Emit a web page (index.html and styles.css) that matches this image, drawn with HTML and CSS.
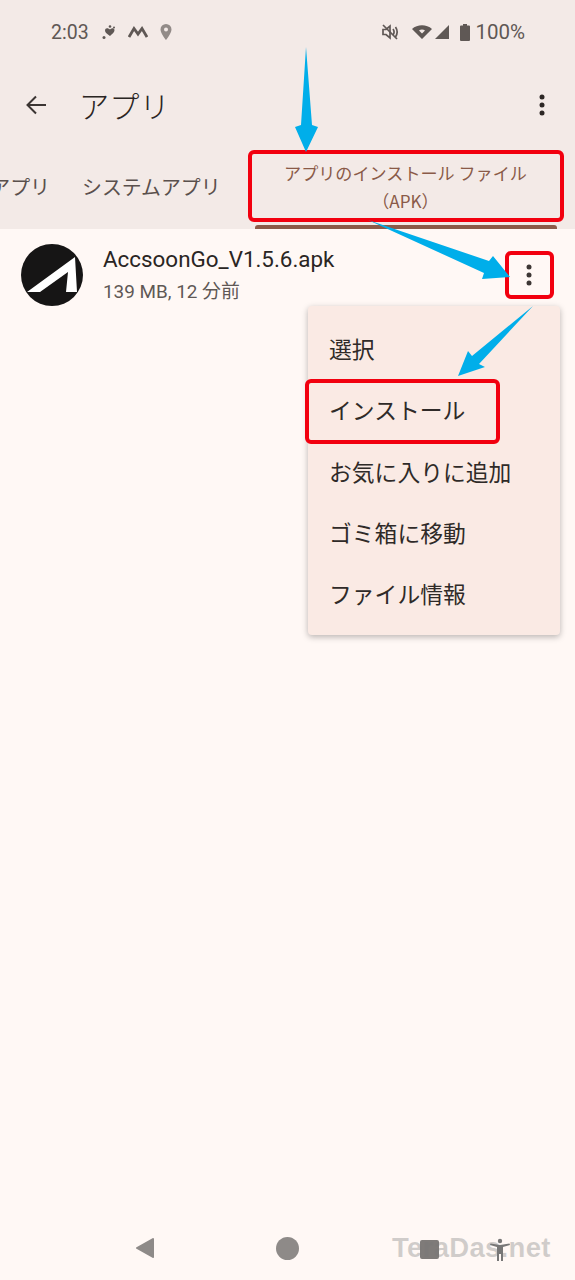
FILE: index.html
```
<!DOCTYPE html>
<html lang="ja">
<head>
<meta charset="utf-8">
<title>アプリ</title>
<link rel="stylesheet" href="styles.css">
</head>
<body>
<div class="screen">
  <header class="top">
    <div class="status">
      <div class="status-left">
        <span class="time">2:03</span>
        <svg class="ic" width="16" height="16" viewBox="0 0 16 16"><path d="M8 14c-3-2-5-3.500-5-5.500C3 7 4 6.200 5 6.200c1.200 0 2.300.6 3 1.300.7-.7 1.600-1.300 2.800-1.300 1 0 1.700.8 1.700 2 0 2-2.500 3.800-4.500 5.800z" transform="translate(1 -2)" fill="#5f5855"/><circle cx="9" cy="2.500" r="1.300" fill="#5f5855"/><circle cx="3" cy="13.500" r="1.500" fill="#5f5855"/><circle cx="13" cy="3.500" r="1" fill="#5f5855"/></svg>
        <svg class="ic" width="20" height="14" viewBox="0 0 20 14"><path d="M1 12 6 3.500 10 9l4-5.500L19 12" fill="none" stroke="#5f5855" stroke-width="2.800"/></svg>
        <svg class="ic" width="14" height="18" viewBox="0 0 14 18"><path fill-rule="evenodd" d="M7 1a5.500 5.500 0 0 0-5.500 5.500C1.500 10.500 7 17 7 17s5.500-6.500 5.500-10.500A5.500 5.500 0 0 0 7 1zm0 3.500a2 2 0 1 1 0 4 2 2 0 0 1 0-4z" fill="#928b88"/></svg>
      </div>
      <div class="status-right">
        <svg class="ic mute" width="18" height="18" viewBox="0 0 18 18"><path d="M2 6.500h3L9 3v12l-4-3.500H2z" fill="none" stroke="#5f5855" stroke-width="1.700"/><path d="M12 6c1.300 1.800 1.300 4.200 0 6M14.500 4c2 3 2 7 0 10M2 2l14 14" fill="none" stroke="#5f5855" stroke-width="1.700"/></svg>
        <svg class="ic wifi" width="22" height="16" viewBox="0 0 22 16"><path fill-rule="evenodd" d="M11 15 1 5c5.500-5 14.500-5 20 0zm0-5.500 3-3c-1.800-1.200-4.200-1.200-6 0z" fill="#5f5855"/></svg>
        <svg class="ic signal" width="16" height="16" viewBox="0 0 16 16"><path d="M15 1v14H1z" fill="#5f5855"/></svg>
        <svg class="ic battery" width="10" height="17" viewBox="0 0 10 17"><path d="M3 0h4v1.500h2a1 1 0 0 1 1 1V16a1 1 0 0 1-1 1H1a1 1 0 0 1-1-1V2.500a1 1 0 0 1 1-1h2z" fill="#5f5855"/></svg>
        <span class="pct">100%</span>
      </div>
    </div>
    <div class="toolbar">
      <svg class="back" width="24" height="24" viewBox="0 0 24 24"><path d="M22 12H4M12 3.500 3.500 12l8.500 8.500" fill="none" stroke="#3b3533" stroke-width="2"/></svg>
      <h1 class="title">アプリ</h1>
      <svg class="more" width="6" height="22" viewBox="0 0 6 22"><circle cx="3" cy="3" r="2.500"/><circle cx="3" cy="11" r="2.500"/><circle cx="3" cy="19" r="2.500"/></svg>
    </div>
    <nav class="tabs">
      <div class="tab tab-cut">アプリ</div>
      <div class="tab tab-system">システムアプリ</div>
      <div class="tab tab-active">
        <span>アプリのインストール ファイル</span>
        <span>（APK）</span>
        <i class="indicator"></i>
      </div>
    </nav>
  </header>
  <main class="list">
    <div class="row">
      <svg class="logo" width="62" height="62" viewBox="0 0 62 62"><circle cx="31" cy="31" r="31" fill="#161515"/><path d="M6 48 54 13 56 48H45L47 28 19 48z" fill="#fff"/></svg>
      <div class="row-text">
        <div class="name">AccsoonGo_V1.5.6.apk</div>
        <div class="meta">139 MB, 12 分前</div>
      </div>
      <svg class="more row-more" width="6" height="22" viewBox="0 0 6 22"><circle cx="3" cy="3" r="2.500"/><circle cx="3" cy="11" r="2.500"/><circle cx="3" cy="19" r="2.500"/></svg>
    </div>
  </main>
  <footer class="navbar">
    <svg class="nav-back" width="20" height="22" viewBox="0 0 20 22"><path d="M18 2 2 11l16 9z" fill="#8e8a88" stroke="#8e8a88" stroke-width="2" stroke-linejoin="round"/></svg>
    <i class="nav-home"></i>
    <i class="nav-recent"></i>
    <svg class="nav-a11y" width="22" height="24" viewBox="0 0 22 24"><circle cx="11" cy="3" r="2.200" fill="#777"/><path d="M1 7l7 2v14h2v-7h2v7h2V9l7-2-.5-1.500L11 7 1.500 5.500z" fill="#777"/></svg>
  </footer>

  <div class="menu">
    <div class="menu-item">選択</div>
    <div class="menu-item">インストール</div>
    <div class="menu-item">お気に入りに追加</div>
    <div class="menu-item">ゴミ箱に移動</div>
    <div class="menu-item">ファイル情報</div>
  </div>

  <div class="watermark">TeraDas.net</div>

  <i class="mark mark-tab"></i>
  <i class="mark mark-more"></i>
  <i class="mark mark-install"></i>
  <svg class="arrows" width="575" height="1280" viewBox="0 0 575 1280">
    <path d="M306 47 312 125 318 127 306 152 295 127 301 125z"/>
    <path d="M368 220 489 261 493 256 510 277 482 279 484 273z"/>
    <path d="M533 306 479 364 485 367 458 376 468 351 472 356z"/>
  </svg>
</div>
</body>
</html>
```
FILE: styles.css
```
* { box-sizing: border-box; }
html, body { margin: 0; padding: 0; }
body { font-family: "Roboto", "Noto Sans CJK JP", sans-serif; color: #2a2523; }
.screen { position: relative; width: 575px; height: 1280px; overflow: hidden; display: flex; flex-direction: column; background: #fff8f5; }

.top { height: 229px; background: #f3eae7; display: flex; flex-direction: column; }
.status { height: 64px; padding: 0 50px 0 51px; display: flex; justify-content: space-between; align-items: center; color: #5f5855; }
.status-left, .status-right { display: flex; align-items: center; }
.time { font-size: 19.500px; margin-right: 12px; }
.status-left .ic { margin-right: 11px; }
.mute { margin-right: 12px; }
.wifi { margin-right: 1px; }
.signal { margin-right: 10px; }
.pct { font-size: 20.500px; margin-left: 5px; }

.toolbar { height: 82px; padding: 0 30px 0 24px; display: flex; align-items: center; }
.back { margin-right: 31px; }
.title { flex: 1; margin: 0; font-size: 30.200px; font-weight: 300; color: #2a2523; font-family: "Noto Sans CJK JP", sans-serif; }
.more { fill: #2c2725; }

.tabs { flex: 1; position: relative; display: flex; align-items: center; font-family: "Noto Sans CJK JP", sans-serif; color: #5a504d; font-size: 19.900px; }
.tab { white-space: nowrap; }
.tab-cut { width: 50px; direction: rtl; overflow: hidden; margin-right: 32px; padding-bottom: 3px; }
.tab-system { width: 172px; padding-bottom: 3px; }
.tab-active { position: relative; flex: none; width: 303px; height: 83px; display: flex; flex-direction: column; align-items: center; justify-content: center; color: #8a5a48; font-size: 17.100px; line-height: 28px; padding-bottom: 2px; }
.indicator { position: absolute; left: 1px; right: 0; bottom: 0; height: 4px; background: #8c5a48; border-radius: 3px 3px 0 0; }

.list { flex: 1; }
.row { height: 89px; padding: 15px 43px 0 21px; display: flex; align-items: flex-start; }
.logo { flex: none; margin-right: 20px; }
.row-text { flex: 1; }
.name { font-size: 22.400px; line-height: 28px; margin-top: 1px; color: #2a2523; }
.meta { font-size: 18.900px; line-height: 26px; margin-top: 6px; color: #5f5855; }
.row-more { margin-top: 20px; fill: #3d3735; }

.navbar { height: 52px; padding: 0 0 0 135px; display: flex; align-items: flex-start; }
.nav-back { margin-top: 9px; }
.nav-home { width: 23px; height: 23px; margin: 8.500px 0 0 121px; border-radius: 50%; background: #8e8a88; }
.nav-recent { width: 19px; height: 19px; margin: 12px 0 0 121px; border-radius: 2px; background: #7f7b79; }
.nav-a11y { margin: 10px 0 0 50px; }

.menu { position: absolute; left: 308px; top: 306px; width: 252px; height: 329px; padding: 12px 0 10.750px; background: #faeae4; border-radius: 4px; box-shadow: 0 2px 6px rgba(0,0,0,.28); display: flex; flex-direction: column; font-family: "Noto Sans CJK JP", sans-serif; }
.menu-item { flex: none; height: 61.250px; padding-left: 21px; display: flex; align-items: center; font-size: 22.800px; color: #2f2a28; }

.watermark { position: absolute; left: 392px; top: 1232px; font-size: 27.500px; font-weight: 700; font-family: "Liberation Sans", sans-serif; color: rgba(120,120,120,.34); letter-spacing: .3px; }

.mark { position: absolute; border: 4px solid #f2000f; border-radius: 6px; }
.mark-tab { left: 248px; top: 150px; width: 316px; height: 72px; }
.mark-more { left: 505px; top: 251px; width: 49px; height: 48px; }
.mark-install { left: 305px; top: 379px; width: 195px; height: 65px; }

.arrows { position: absolute; left: 0; top: 0; fill: #00aeea; pointer-events: none; }
```
